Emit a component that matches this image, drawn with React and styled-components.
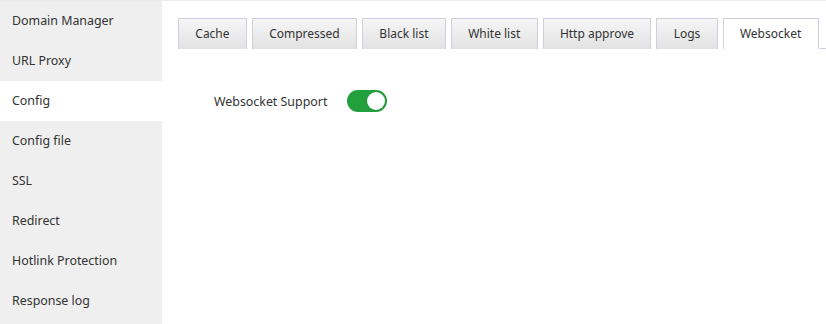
import React, { useState } from "react";
import styled, { createGlobalStyle } from "styled-components";

const Global = createGlobalStyle`
  html, body { margin: 0; padding: 0; background: #fff; }
  body { font-family: "Noto Sans", "Open Sans", sans-serif; font-size: 12.4px; color: #333; }
`;

const Page = styled.div`
  display: flex;
  width: 826px;
  height: 324px;
  border-top: 1px solid #ececec;
  box-sizing: border-box;
  overflow: hidden;
`;

const Sidebar = styled.nav`
  width: 162px;
  flex: none;
  background: #efefef;
  display: flex;
  flex-direction: column;
`;

const NavItem = styled.div`
  height: 40px;
  display: flex;
  align-items: center;
  padding-left: 12px;
  padding-bottom: 1px;
  box-sizing: border-box;
  font-size: 12.4px;
  color: #333;
  white-space: nowrap;
  background: ${(p) => (p.$active ? "#fff" : "transparent")};
`;

const Main = styled.main`
  flex: 1;
  padding: 16px 0 0 16px;
  display: flex;
  flex-direction: column;
`;

const TabBar = styled.div`
  display: flex;
  align-items: flex-end;
  gap: 5px;
  height: 32px;
`;

const Tab = styled.div`
  height: 31px;
  box-sizing: border-box;
  padding: 0 16.3px 1px;
  display: flex;
  align-items: center;
  font-size: 12px;
  color: #333;
  white-space: nowrap;
  border: 1px solid #cfcfe0;
  border-bottom: none;
  background: ${(p) =>
    p.$active ? "#fff" : "linear-gradient(#f6f6f6, #e2e2e2)"};
`;

const Filler = styled.div`
  flex: 1;
  align-self: stretch;
  border-bottom: 1px solid #cfcfe0;
  margin-left: -4px;
`;

const Row = styled.div`
  display: flex;
  align-items: center;
  margin-top: 41px;
  padding-left: 36px;
  gap: 20px;
`;

const Label = styled.span`
  font-size: 12.4px;
  color: #333;
  white-space: nowrap;
`;

const Switch = styled.button`
  width: 40px;
  height: 22px;
  border-radius: 11px;
  border: none;
  padding: 0;
  background: ${(p) => (p.$on ? "#22a03c" : "#ccc")};
  display: flex;
  align-items: center;
  justify-content: ${(p) => (p.$on ? "flex-end" : "flex-start")};
  cursor: pointer;
`;

const Knob = styled.span`
  width: 18px;
  height: 18px;
  border-radius: 50%;
  background: #fff;
  margin: 0 2px;
  box-shadow: 0 0 1px rgba(0, 0, 0, 0.3);
`;

const navItems = [
  "Domain Manager",
  "URL Proxy",
  "Config",
  "Config file",
  "SSL",
  "Redirect",
  "Hotlink Protection",
  "Response log",
];

const tabs = [
  "Cache",
  "Compressed",
  "Black list",
  "White list",
  "Http approve",
  "Logs",
  "Websocket",
];

export default function App() {
  const [on, setOn] = useState(true);
  return (
    <>
      <Global />
      <Page>
        <Sidebar>
          {navItems.map((n) => (
            <NavItem key={n} $active={n === "Config"}>
              {n}
            </NavItem>
          ))}
        </Sidebar>
        <Main>
          <TabBar>
            {tabs.map((t) => (
              <Tab key={t} $active={t === "Websocket"}>
                {t}
              </Tab>
            ))}
            <Filler />
          </TabBar>
          <Row>
            <Label>Websocket Support</Label>
            <Switch $on={on} onClick={() => setOn(!on)}>
              <Knob />
            </Switch>
          </Row>
        </Main>
      </Page>
    </>
  );
}
